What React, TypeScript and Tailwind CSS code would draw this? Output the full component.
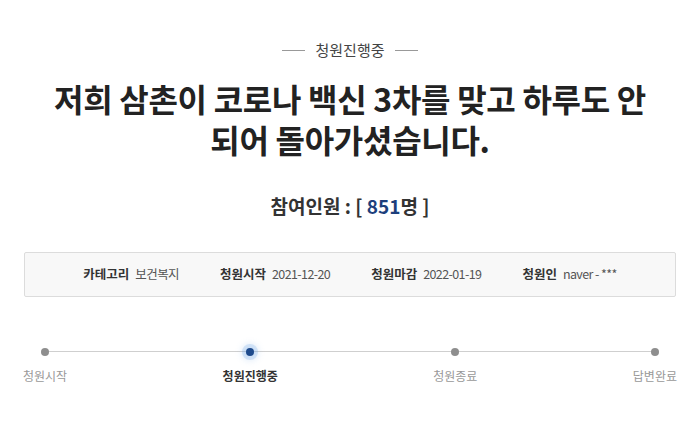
import React from 'react';

const FONT = { fontFamily: '"Noto Sans CJK KR", "Noto Sans", sans-serif' };

const infoItems = [
  { label: '카테고리', value: '보건복지' },
  { label: '청원시작', value: '2021-12-20' },
  { label: '청원마감', value: '2022-01-19' },
  { label: '청원인', value: 'naver - ***' },
];

const steps = [
  { label: '청원시작', active: false },
  { label: '청원진행중', active: true },
  { label: '청원종료', active: false },
  { label: '답변완료', active: false },
];

export default function App() {
  return (
    <div className="w-[700px] h-[429px] bg-white text-[#333] overflow-hidden" style={FONT}>
      {/* status badge */}
      <div className="pt-[38px] flex items-center justify-center gap-[10px]">
        <span className="w-[23px] h-px bg-[#999]"></span>
        <span className="text-[15px] leading-[24px] text-[#444]">청원진행중</span>
        <span className="w-[23px] h-px bg-[#999]"></span>
      </div>

      {/* title */}
      <h1 className="mt-[16px] flex flex-col items-center text-[32px] font-bold text-[#222] tracking-[-0.3px]">
        <span className="block h-[41px] leading-[41px]">저희 삼촌이 코로나 백신 3차를 맞고 하루도 안</span>
        <span className="block h-[41px] leading-[41px]">되어 돌아가셨습니다.</span>
      </h1>

      {/* participants */}
      <div className="mt-[33px] text-center text-[19px] leading-[26px] font-bold text-[#333]">
        참여인원 : [ <span className="text-[#1d3f7c]">851</span>명 ]
      </div>

      {/* info box */}
      <div className="mt-[33px] mx-[24px] h-[45px] bg-[#f8f8f8] border border-[#dcdcdc] rounded-[2px] flex items-center justify-center gap-[41px]">
        {infoItems.map((item) => (
          <div key={item.label} className="flex items-center gap-[6px] text-[12.5px] text-[#333]">
            <span className="font-bold">{item.label}</span>
            <span className="text-[#555] tracking-[-0.6px]">{item.value}</span>
          </div>
        ))}
      </div>

      {/* progress */}
      <div className="mt-[50px] mx-[23px] relative">
        <div className="absolute left-[20px] right-[20px] top-[4px] h-px bg-[#cfcfcf]"></div>
        <div className="relative flex justify-between">
          {steps.map((s) => (
            <div key={s.label} className="flex flex-col items-center">
              <div className="h-[9px] flex items-center justify-center">
                {s.active ? (
                  <span className="w-[8px] h-[8px] rounded-full bg-[#1d4a8c] shadow-[0_0_0_4px_rgba(120,170,230,0.25),0_0_6px_5px_rgba(120,170,230,0.2)]"></span>
                ) : (
                  <span className="w-[8px] h-[8px] rounded-full bg-[#8e8e8e]"></span>
                )}
              </div>
              <span
                className={
                  s.active
                    ? 'mt-[11px] text-[12px] leading-[18px] font-bold text-[#333]'
                    : 'mt-[11px] text-[12px] leading-[18px] text-[#999]'
                }
              >
                {s.label}
              </span>
            </div>
          ))}
        </div>
      </div>
    </div>
  );
}
